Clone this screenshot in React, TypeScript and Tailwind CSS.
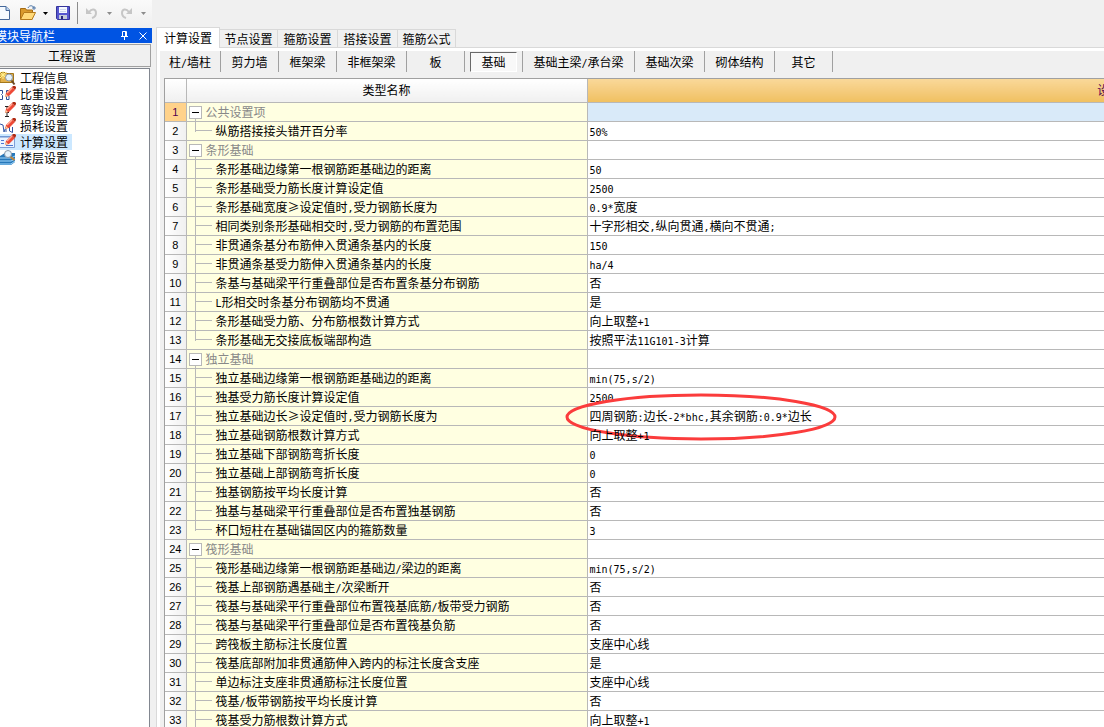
import type { ReactNode } from 'react';

interface SettingRow {
  name: string;
  value?: string;
  group?: boolean;
}

const navItems = ['工程信息', '比重设置', '弯钩设置', '损耗设置', '计算设置', '楼层设置'];

const tabs = [
  { label: '计算设置', width: 'w-16' },
  { label: '节点设置', width: 'w-[58px]' },
  { label: '箍筋设置', width: 'w-[60px]' },
  { label: '搭接设置', width: 'w-[60px]' },
  { label: '箍筋公式', width: 'w-[58px]' },
];

const categories = [
  { label: '柱/墙柱', width: 'w-[61px]' },
  { label: '剪力墙', width: 'w-[58px]' },
  { label: '框架梁', width: 'w-[58px]' },
  { label: '非框架梁', width: 'w-[70px]' },
  { label: '板', width: 'w-[58px]' },
  { label: '基础', width: 'w-[58px]' },
  { label: '基础主梁/承台梁', width: 'w-[112px]' },
  { label: '基础次梁', width: 'w-[70px]' },
  { label: '砌体结构', width: 'w-[70px]' },
  { label: '其它', width: 'w-[58px]' },
];

const rows: SettingRow[] = [
  { name: '公共设置项', group: true },
  { name: '纵筋搭接接头错开百分率', value: '50%' },
  { name: '条形基础', group: true },
  { name: '条形基础边缘第一根钢筋距基础边的距离', value: '50' },
  { name: '条形基础受力筋长度计算设定值', value: '2500' },
  { name: '条形基础宽度≥设定值时,受力钢筋长度为', value: '0.9*宽度' },
  { name: '相同类别条形基础相交时,受力钢筋的布置范围', value: '十字形相交,纵向贯通,横向不贯通;' },
  { name: '非贯通条基分布筋伸入贯通条基内的长度', value: '150' },
  { name: '非贯通条基受力筋伸入贯通条基内的长度', value: 'ha/4' },
  { name: '条基与基础梁平行重叠部位是否布置条基分布钢筋', value: '否' },
  { name: 'L形相交时条基分布钢筋均不贯通', value: '是' },
  { name: '条形基础受力筋、分布筋根数计算方式', value: '向上取整+1' },
  { name: '条形基础无交接底板端部构造', value: '按照平法11G101-3计算' },
  { name: '独立基础', group: true },
  { name: '独立基础边缘第一根钢筋距基础边的距离', value: 'min(75,s/2)' },
  { name: '独基受力筋长度计算设定值', value: '2500' },
  { name: '独立基础边长≥设定值时,受力钢筋长度为', value: '四周钢筋:边长-2*bhc,其余钢筋:0.9*边长' },
  { name: '独立基础钢筋根数计算方式', value: '向上取整+1' },
  { name: '独立基础下部钢筋弯折长度', value: '0' },
  { name: '独立基础上部钢筋弯折长度', value: '0' },
  { name: '独基钢筋按平均长度计算', value: '否' },
  { name: '独基与基础梁平行重叠部位是否布置独基钢筋', value: '否' },
  { name: '杯口短柱在基础锚固区内的箍筋数量', value: '3' },
  { name: '筏形基础', group: true },
  { name: '筏形基础边缘第一根钢筋距基础边/梁边的距离', value: 'min(75,s/2)' },
  { name: '筏基上部钢筋遇基础主/次梁断开', value: '否' },
  { name: '筏基与基础梁平行重叠部位布置筏基底筋/板带受力钢筋', value: '否' },
  { name: '筏基与基础梁平行重叠部位是否布置筏基负筋', value: '否' },
  { name: '跨筏板主筋标注长度位置', value: '支座中心线' },
  { name: '筏基底部附加非贯通筋伸入跨内的标注长度含支座', value: '是' },
  { name: '单边标注支座非贯通筋标注长度位置', value: '支座中心线' },
  { name: '筏基/板带钢筋按平均长度计算', value: '否' },
  { name: '筏基受力筋根数计算方式', value: '向上取整+1' },
];

// Latin characters take half the width of a Chinese one
function Mixed({ text }: { text: string }) {
  return (
    <>
      {text.split(/([\x20-\x7e]+)/).map((part, i): ReactNode =>
        i % 2 === 1 ? (
          <span key={i} className="font-['DejaVu_Sans_Mono',monospace] text-[10px] leading-none">{part}</span>
        ) : (
          part
        )
      )}
    </>
  );
}

function Pencil() {
  return (
    <g>
      <path d="M5 11l1-4 6-6 3 3-6 6z" fill="#ee4a38" />
      <path d="M7 7l5-5" stroke="#ffab98" strokeWidth="1.5" />
      <path d="M12 1l1-1h2l1 1v1l-1 2z" fill="#b02a12" />
      <path d="M5 11l1-3 2 2z" fill="#f7d3a0" />
    </g>
  );
}

function NavIcon({ index }: { index: number }) {
  return (
    <svg className="h-4 w-4 shrink-0" viewBox="0 0 16 16" fill="none">
      {index === 0 && (
        <>
          <path d="M0 2.5h6l1 1h6.500v9H0z" fill="#e3b04a" stroke="#a3771c" />
          <path d="M0 5h6M3 1v8M0 2l6 6M6 2L0 8" stroke="#fff08a" />
          <circle cx="9" cy="7.500" r="3.500" fill="#e4f1fb" stroke="#8a97a6" />
          <path d="M11.500 10.500l3 4" stroke="#6b4a26" strokeWidth="2" />
        </>
      )}
      {index === 1 && (
        <>
          <path d="M0 4.500h2.500v3l-1 1 1 1v4H0M9 4.500H6.500v3l1 1-1 1v4H9V10" stroke="#314e96" />
          <Pencil />
        </>
      )}
      {index === 2 && (
        <>
          <path d="M5 4.500h4M7 5v9M5 14.500h4M5 10.500h4" stroke="#222" />
          <Pencil />
        </>
      )}
      {index === 3 && (
        <>
          <path d="M0 6l3 1 1 7 2-5v5M9.500 7v6l3 1.500V9" stroke="#3154a5" />
          <Pencil />
        </>
      )}
      {index === 4 && (
        <>
          <path d="M0 2.500h14.500v11H0" fill="#eaf3ff" stroke="#7d9fd6" />
          <path d="M0 3h14" stroke="#668fd0" />
          <path d="M1 6.500h3M1 9.500h3M6 11.500h7" stroke="#4a76d2" />
          <Pencil />
        </>
      )}
      {index === 5 && (
        <>
          <path d="M0 6l5-3h10v9l-4 3H0z" fill="#2777b9" />
          <path d="M0 8h11l4-2M0 11h11l4-2M0 14h11l4-3" stroke="#a6dcff" />
          <circle cx="8" cy="4" r="3.500" fill="#e5f3fd" stroke="#8696a8" />
          <path d="M10.500 7l4 3" stroke="#c58437" strokeWidth="2" />
        </>
      )}
    </svg>
  );
}

function Caret({ className }: { className: string }) {
  return (
    <svg className={`h-[3px] w-[5px] ${className}`} viewBox="0 0 5 3">
      <path d="M0 0h5L2.500 3z" fill="currentColor" />
    </svg>
  );
}

function Toolbar() {
  return (
    <div className="flex h-[26px] w-[152px] shrink-0 items-center bg-gradient-to-b from-[#fafafa] to-[#f0f0f0]">
      <button aria-label="新建" className="w-[11px] overflow-hidden">
        <svg className="h-4 w-[11px]" viewBox="0 0 11 16">
          <path d="M0 1.500h6l3.500 3.500v9.500H0" fill="#f5faff" stroke="#45689a" />
          <path d="M6 1.500v4h3.500" fill="#bcd6f3" stroke="#45689a" />
        </svg>
      </button>
      <button aria-label="打开" className="ml-2">
        <svg className="h-4 w-[18px]" viewBox="0 0 18 16" fill="none">
          <path d="M1.500 14V3.500h5l1 1.500h6v9z" fill="#d99a2c" stroke="#a66b12" />
          <path d="M1.500 14.500L5 7.500h11.500l-3.500 7z" fill="#ffd978" stroke="#b57b1c" />
          <path d="M9 3c1-3 5-3 6 0M13 3h4M15 1v4" stroke="#547ba9" />
        </svg>
      </button>
      <button aria-label="打开列表" className="ml-[6px]"><Caret className="text-black" /></button>
      <button aria-label="保存" className="ml-2">
        <svg className="h-[14px] w-[14px]" viewBox="0 0 14 14">
          <path d="M.5.5h13v13h-12l-1-1z" fill="#5656cf" stroke="#34349a" />
          <path d="M3 1h8v6H3z" fill="#f5f8ff" />
          <path d="M4 3.500h6M4 5.500h6" stroke="#cfd8ee" />
          <path d="M3 9h8v4H3z" fill="#c3c9d8" />
          <path d="M5 10h2v3H5z" fill="#27277b" />
        </svg>
      </button>
      <div className="ml-[7px] h-[22px] w-px bg-[#8c8c8c]" />
      <button aria-label="撤销" className="ml-2">
        <svg className="h-3 w-3" viewBox="0 0 12 12" fill="none">
          <path d="M3 5c3-4 7-3 7 1 0 2-1 4-4 5" stroke="#c6c6c6" strokeWidth="2" />
          <path d="M0 1v6h6z" fill="#c6c6c6" />
        </svg>
      </button>
      <button aria-label="撤销列表" className="ml-[9px]"><Caret className="text-[#8c8c8c]" /></button>
      <button aria-label="恢复" className="ml-2">
        <svg className="h-3 w-3" viewBox="0 0 12 12" fill="none">
          <path d="M9 5C6 1 2 2 2 6c0 2 1 4 4 5" stroke="#c6c6c6" strokeWidth="2" />
          <path d="M12 1v6H6z" fill="#c6c6c6" />
        </svg>
      </button>
      <button aria-label="恢复列表" className="ml-[9px]"><Caret className="text-[#8c8c8c]" /></button>
    </div>
  );
}

function Sidebar() {
  return (
    <aside className="flex w-[152px] shrink-0 flex-col">
      <div className="mt-[2px] flex h-[15px] items-center bg-[#0054e3] text-white">
        <h2 className="-ml-[5px] flex-1">模块导航栏</h2>
        <button aria-label="固定" className="mr-[11px]">
          <svg className="h-[9px] w-[7px]" viewBox="0 0 7 9" fill="none">
            <path d="M1.500 5V.5h4V5M4.500 0v5M0 5.500h7M3.500 6v3" stroke="white" />
          </svg>
        </button>
        <button aria-label="关闭" className="mr-[5px]">
          <svg className="h-2 w-2" viewBox="0 0 8 8">
            <path d="M.5.5l7 7M7.500.5l-7 7" stroke="white" />
          </svg>
        </button>
      </div>
      <button className="mt-px mr-px h-[23px] border border-l-0 border-[#a0a0a0] bg-[#f0f0f0] pr-[6px]">工程设置</button>
      <nav className="mt-px mr-[2px] flex-1 border-t border-r border-[#828790] bg-white pt-px">
        {navItems.map((item, i) => (
          <a key={item} href="#" className={`flex h-4 w-[72px] items-center ${i === 4 ? 'bg-[#cce8ff]' : ''}`}>
            <NavIcon index={i} />
            <span className="pl-1 leading-4">{item}</span>
          </a>
        ))}
      </nav>
    </aside>
  );
}

function SettingsTable() {
  return (
    <table className="w-[1478px] table-fixed border-collapse leading-4">
      <colgroup>
        <col className="w-[21px]" />
        <col className="w-[401px]" />
        <col />
      </colgroup>
      <thead>
        <tr className="h-[23px]">
          <th className="border-r border-b border-[#b8b8b8] bg-gradient-to-b from-white to-[#f0f0f0] p-0" />
          <th className="border-r border-b border-[#b8b8b8] bg-gradient-to-b from-white to-[#f0f0f0] p-0 font-normal">类型名称</th>
          <th className="border-b border-[#b8b8b8] bg-gradient-to-b from-[#f9d899] to-[#f0c060] p-0 font-normal text-[#500050]">设置值</th>
        </tr>
      </thead>
      <tbody>
        {rows.map((row, i) => {
          const last = !!rows[i + 1]?.group;
          return (
            <tr key={i} className="h-[19px]">
              <th className={`border-r border-b border-[#b8b8b8] p-0 font-['Liberation_Sans',sans-serif] text-[11px] font-normal ${i === 0 ? 'bg-[#ffd28a] text-[#500050]' : 'bg-gradient-to-r from-white to-[#f0f0f0]'}`}>
                {i + 1}
              </th>
              <td className="border-r border-b border-[#b8b8b8] bg-[#ffffe1] p-0">
                {row.group ? (
                  <div className="flex h-[18px] items-center pl-[2px] text-[#888]">
                    <div className="flex h-full w-[13px] flex-col items-center pt-[3px]">
                      <button aria-label="折叠" className="flex h-[13px] w-[13px] shrink-0 items-center justify-center border border-[#b8b8b8] bg-white">
                        <span className="h-px w-[7px] bg-black" />
                      </button>
                      <span className="w-px flex-1 bg-[#b8b8b8]" />
                    </div>
                    <span className="pl-1">{row.name}</span>
                  </div>
                ) : (
                  <div className="flex h-[18px] items-center pl-2">
                    <span className={`w-px self-start bg-[#b8b8b8] ${last ? 'h-[10px]' : 'h-full'}`} />
                    <span className="h-px w-4 bg-[#b8b8b8]" />
                    <span className="pl-1 whitespace-nowrap"><Mixed text={row.name} /></span>
                  </div>
                )}
              </td>
              <td className={`border-b border-[#b8b8b8] p-0 pl-[2px] whitespace-nowrap ${i === 0 ? 'bg-[#d9eaf9]' : 'bg-white'}`}>
                <div className="relative h-4">
                  <Mixed text={row.value ?? ''} />
                  {i === 16 && (
                    <svg className="absolute -top-[15px] -left-[25px] h-12 w-[272px]" viewBox="0 0 272 48" fill="none">
                      <ellipse cx="136" cy="24" rx="134" ry="22" stroke="#fb3c3c" strokeWidth="3" />
                    </svg>
                  )}
                </div>
              </td>
            </tr>
          );
        })}
      </tbody>
    </table>
  );
}

export default function App() {
  return (
    <div className="flex h-screen flex-col overflow-hidden bg-[#f0f0f0] font-['Noto_Sans_CJK_SC',sans-serif] text-[12px] leading-[18px] text-black">
      <Toolbar />
      <div className="flex min-h-0 flex-1">
        <Sidebar />
        <main className="ml-1 flex min-w-0 flex-1 flex-col">
          <div role="tablist" className="flex h-[22px] shrink-0 items-end border-b border-[#d9d9d9]">
            {tabs.map(({ label, width }, i) => (
              <button
                key={label}
                role="tab"
                aria-selected={i === 0}
                className={i === 0
                  ? `-mb-px h-[21px] border border-b-0 border-[#d9d9d9] bg-white pb-px ${width}`
                  : `h-[18px] border-t border-r border-[#d9d9d9] ${width}`}
              >
                {label}
              </button>
            ))}
          </div>
          <div className="flex min-h-0 flex-1 border-l border-[#d9d9d9]">
            <div className="flex min-w-0 flex-1 flex-col border-t-[3px] border-l-[3px] border-white">
              <div className="flex h-[27px] shrink-0 items-start">
                {categories.map(({ label, width }) => (
                  <div key={label} className={`flex h-[21px] shrink-0 items-center border-r border-[#a0a0a0] ${width}`}>
                    <button className={label === '基础'
                      ? 'mx-auto h-5 w-[47px] border border-t-[#696969] border-r-white border-b-white border-l-[#696969] bg-[#f8f8f8]'
                      : 'h-full w-full'}>
                      <Mixed text={label} />
                    </button>
                  </div>
                ))}
              </div>
              <div className="ml-1 min-h-0 flex-1 overflow-hidden border-t border-l border-[#a0a0a0] bg-white">
                <SettingsTable />
              </div>
            </div>
          </div>
        </main>
      </div>
    </div>
  );
}
